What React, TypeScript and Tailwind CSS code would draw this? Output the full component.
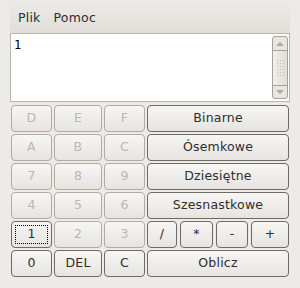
import { ReactNode } from 'react';

const font = { fontFamily: '"DejaVu Sans", "Liberation Sans", sans-serif' };

interface KeyProps {
  label: ReactNode;
  w: string;
  disabled?: boolean;
  focused?: boolean;
}

function Key({ label, w, disabled = false, focused = false }: KeyProps) {
  return (
    <button
      className={
        'relative h-[27px] shrink-0 rounded-[4px] border text-[12.5px] tracking-[0.2px] font-normal flex items-center justify-center bg-gradient-to-b from-[#f7f6f4] to-[#e7e4e0] ' +
        w +
        (disabled ? ' border-[#b3aba1] text-[#bcb7b0]' : ' border-[#6f6a63] text-[#2e2e2e]')
      }
    >
      {focused && (
        <span className="absolute inset-x-[3px] inset-y-[3px] border border-dotted border-black" />
      )}
      <span className="relative">{label}</span>
    </button>
  );
}

function ScrollBar() {
  return (
    <div className="absolute right-[1px] top-[2px] bottom-[2px] w-[16px] rounded-[3px] border border-[#a8a196] bg-[#e9e6e2] flex flex-col">
      <div className="h-[14px] flex items-center justify-center border-b border-[#a8a196]">
        <svg width="8" height="5" viewBox="0 0 8 5">
          <path d="M0 5 L4 1 L8 5 Z" fill="#b0aaa2" />
        </svg>
      </div>
      <div className="flex-1 bg-gradient-to-r from-[#f2f0ed] to-[#e2ded9] flex items-center justify-center border-b border-[#a8a196]">
        <div className="grid grid-cols-3 gap-[2px]">
          {Array.from({ length: 18 }).map((_, i) => (
            <span key={i} className="w-[1px] h-[1px] bg-[#c3bdb5]" />
          ))}
        </div>
      </div>
      <div className="h-[12px] flex items-center justify-center">
        <svg width="8" height="5" viewBox="0 0 8 5">
          <path d="M0 0 L4 4 L8 0 Z" fill="#b0aaa2" />
        </svg>
      </div>
    </div>
  );
}

export default function App() {
  const rows: { keys: { label: string; w: string; disabled?: boolean; focused?: boolean }[]; right: ReactNode }[] = [
    {
      keys: [
        { label: 'D', w: 'w-[41px]', disabled: true },
        { label: 'E', w: 'w-[48px]', disabled: true },
        { label: 'F', w: 'w-[41px]', disabled: true },
      ],
      right: <Key label="Binarne" w="w-[142px]" />,
    },
    {
      keys: [
        { label: 'A', w: 'w-[41px]', disabled: true },
        { label: 'B', w: 'w-[48px]', disabled: true },
        { label: 'C', w: 'w-[41px]', disabled: true },
      ],
      right: <Key label="Ósemkowe" w="w-[142px]" />,
    },
    {
      keys: [
        { label: '7', w: 'w-[41px]', disabled: true },
        { label: '8', w: 'w-[48px]', disabled: true },
        { label: '9', w: 'w-[41px]', disabled: true },
      ],
      right: <Key label="Dziesiętne" w="w-[142px]" />,
    },
    {
      keys: [
        { label: '4', w: 'w-[41px]', disabled: true },
        { label: '5', w: 'w-[48px]', disabled: true },
        { label: '6', w: 'w-[41px]', disabled: true },
      ],
      right: <Key label="Szesnastkowe" w="w-[142px]" />,
    },
    {
      keys: [
        { label: '1', w: 'w-[41px]', focused: true },
        { label: '2', w: 'w-[48px]', disabled: true },
        { label: '3', w: 'w-[41px]', disabled: true },
      ],
      right: (
        <div className="flex gap-[3px] w-[142px]">
          <Key label="/" w="w-[30px]" />
          <Key label="*" w="w-[33px]" />
          <Key label="-" w="w-[32px]" />
          <Key label="+" w="w-[38px]" />
        </div>
      ),
    },
    {
      keys: [
        { label: '0', w: 'w-[41px]' },
        { label: 'DEL', w: 'w-[48px]' },
        { label: 'C', w: 'w-[41px]' },
      ],
      right: <Key label="Oblicz" w="w-[142px]" />,
    },
  ];

  return (
    <div className="w-[300px] h-[288px] bg-[#edebe8] overflow-hidden" style={font}>
      <div className="mx-[10px] w-[280px]">
        <div className="h-[34px] flex items-end gap-[13px] px-[8px] pb-[5px] text-[12.5px] tracking-[0.2px] text-[#2e2e2e] bg-gradient-to-b from-[#edebe8] to-[#e1ded9] border-b border-[#bdb5ab]">
          <span>Plik</span>
          <span>Pomoc</span>
        </div>
        <div className="relative h-[68px] bg-white border border-[#bab4ac] border-t-0">
          <div
            className="pl-[3px] pt-[4px] text-[12px] leading-[14px] text-black"
            style={{ fontFamily: '"DejaVu Sans Mono", "Liberation Mono", monospace' }}
          >
            1
          </div>
          <ScrollBar />
        </div>
        <div className="mt-[3px] ml-[1px] flex flex-col gap-[2px]">
          {rows.map((row, i) => (
            <div key={i} className="flex gap-[2px]">
              {row.keys.map((k) => (
                <Key key={k.label} label={k.label} w={k.w} disabled={k.disabled} focused={k.focused} />
              ))}
              {row.right}
            </div>
          ))}
        </div>
      </div>
    </div>
  );
}
